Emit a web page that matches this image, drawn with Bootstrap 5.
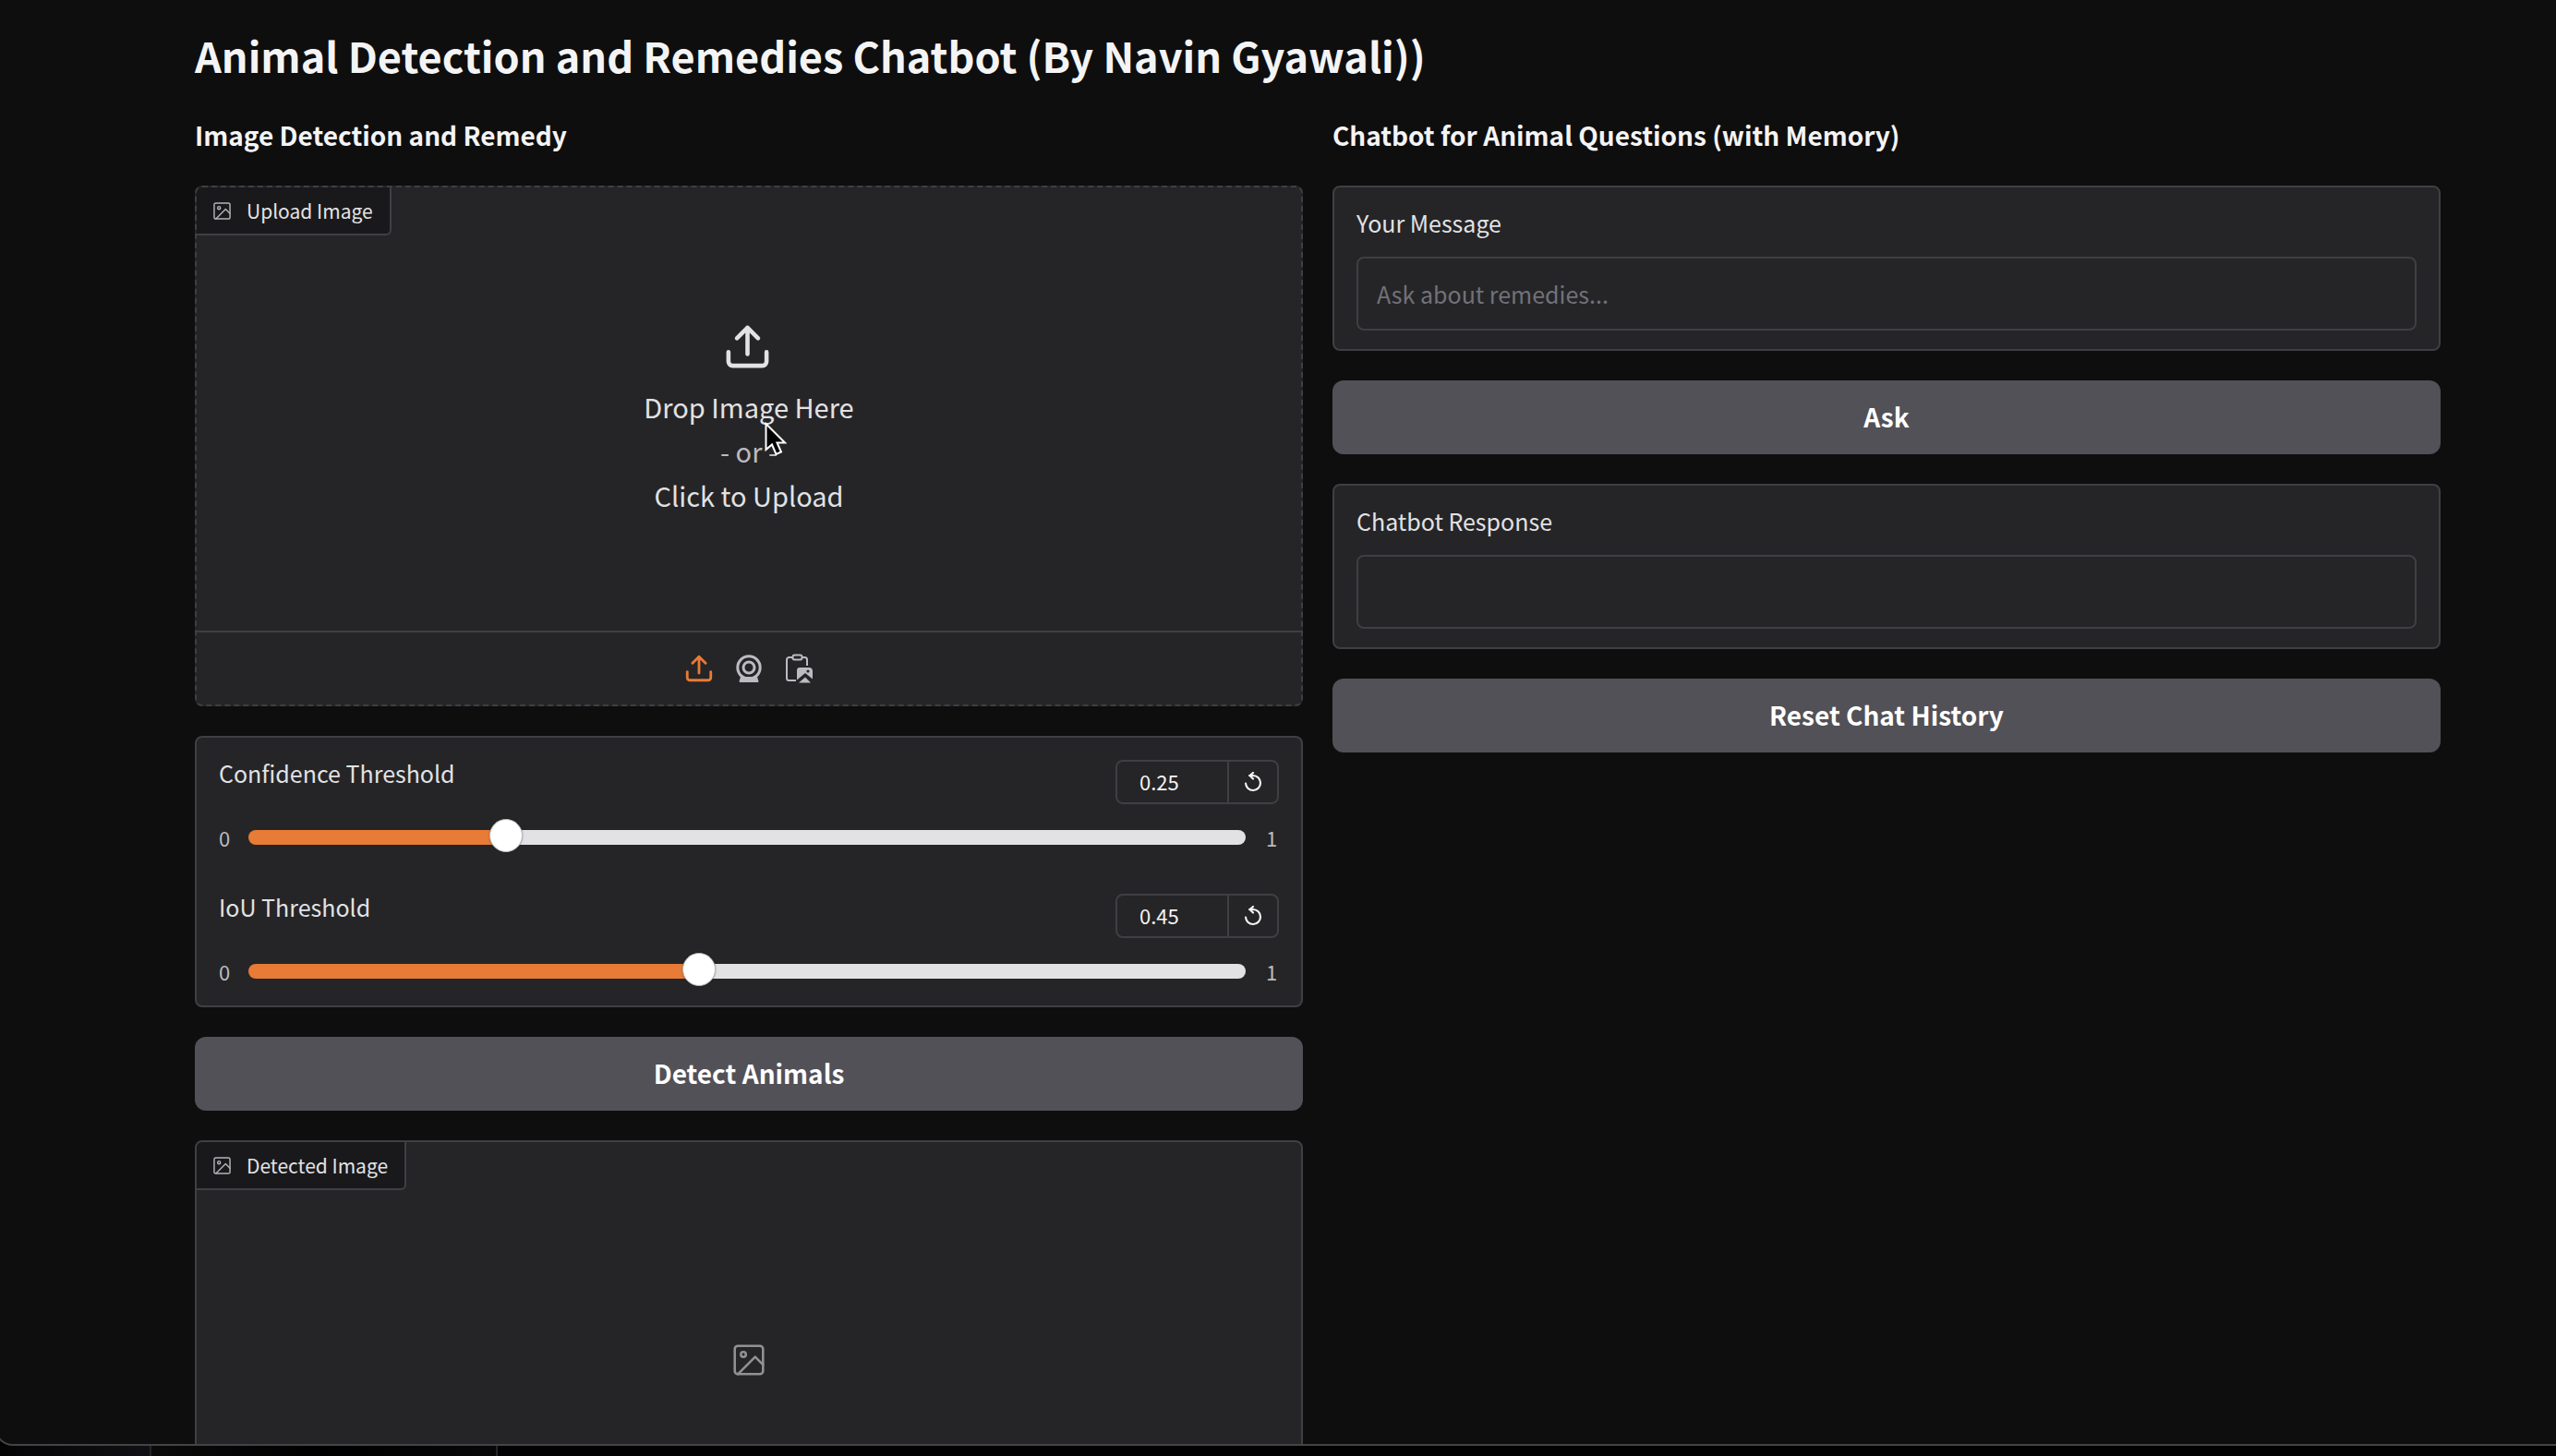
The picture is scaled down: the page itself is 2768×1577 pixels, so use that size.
<!DOCTYPE html>
<html lang="en" data-bs-theme="dark">
<head>
<meta charset="utf-8">
<meta name="viewport" content="width=device-width, initial-scale=1">
<title>Animal Detection and Remedies Chatbot</title>
<link href="https://cdn.jsdelivr.net/npm/bootstrap@5.3.0/dist/css/bootstrap.min.css" rel="stylesheet">
<style>
:root { --page: #0e0e0e; --panel: #252527; --line: #3f3f44; --ink: #f4f4f5; --soft: #e2e2e4; --muted: #bbbbc2; --accent: #e87b35; }
body { background: #000; color: var(--soft); font-family: "Noto Sans CJK SC", "Noto Sans", sans-serif; font-size: 25px; line-height: 36px; }
.app-window { background: var(--page); border: 2px solid #444446; border-width: 0 0 2px 2px; border-bottom-left-radius: 20px; margin-left: -6px; min-height: 0; }
.app-main { padding: 24px 125px 0 215px; }
.app-title { font-size: 45px; line-height: 72px; font-weight: 700; color: var(--ink); margin-bottom: 30px; }
.app-sub { font-size: 28px; line-height: 40px; font-weight: 700; color: var(--ink); margin-bottom: 3px; }
.stack { display: flex; flex-direction: column; gap: 32px; }
.cols { --bs-gutter-x: 32px; }
.panel { background: var(--panel); border: 2px solid var(--line); border-radius: 8px; }
.panel-pad { padding: 24px; }
.dashed { border-style: dashed; }
.upload { height: 564px; }
.tag { background: #19191c; color: var(--soft); border: 2px solid var(--line); border-width: 0 2px 2px 0; border-radius: 6px 0 6px 0; font-size: 21px; line-height: 32px; padding: 9px 18px; gap: 17px; }
.tag svg { color: #b4b4b8; }
.drop-btn { background: none; border: 0; color: var(--soft); font-size: 29px; line-height: 48px; padding: 22px 0 0; gap: 13px; min-height: 0; }
.muted { color: var(--muted); }
.pointer { position: absolute; left: 615px; top: 254px; }
.tools { border-top: 2px solid var(--line); height: 80px; gap: 18px; }
.tools button { background: none; border: 0; padding: 0; width: 36px; height: 36px; color: var(--muted); display: flex; align-items: center; justify-content: center; }
.tools button.on { color: var(--accent); }
.ic { fill: none; stroke: currentColor; stroke-linecap: round; stroke-linejoin: round; }
.sliders { display: flex; flex-direction: column; gap: 48px; }
.sliders label { line-height: 28px; }
.num { width: 177px; height: 48px; border: 2px solid var(--line); border-radius: 8px; overflow: hidden; }
.num input { width: 119px; padding: 0 0 2px 24px; border: 0; background: none; color: var(--ink); font-size: 22px; line-height: 32px; appearance: textfield; -moz-appearance: textfield; }
.num input::-webkit-inner-spin-button { -webkit-appearance: none; margin: 0; }
.num button { flex: 1; border: 0; border-left: 2px solid var(--line); background: none; color: var(--ink); padding: 0; display: flex; align-items: center; justify-content: center; }
.scale { height: 26px; margin-top: 23px; font-size: 22px; line-height: 26px; color: var(--muted); }
.scale span { width: 14px; }
.scale input { -webkit-appearance: none; appearance: none; flex: 1; min-width: 0; margin: 0 22px 0 18px; height: 16px; border-radius: 8px; background: linear-gradient(to right, var(--accent) var(--at), var(--soft) var(--at)); }
.scale input::-webkit-slider-runnable-track { height: 16px; }
.scale input::-webkit-slider-thumb { -webkit-appearance: none; width: 36px; height: 36px; margin-top: -12px; border-radius: 50%; background: #fff; border: 1px solid #b9b9bb; box-shadow: 0 0 2px rgba(0,0,0,.35); }
.big-btn { background: #525157; color: #fff; border: 0; border-radius: 12px; height: 80px; padding: 5px 12px 7px; font-size: 28px; line-height: 40px; font-weight: 700; }
.big-btn:hover { background: #5c5b62; color: #fff; }
.big-in, .big-in:focus { background: transparent; border: 2px solid var(--line); border-radius: 8px; height: 80px; font-size: 25px; line-height: 36px; padding: 0 20px; }
.big-in::placeholder { color: #727279; opacity: 1; }
.panel-text { padding: 20px 24px; }
.panel-text label { margin-bottom: 19px; }
.shot { height: 476px; color: #929294; }
.desk { height: 11px; background: #020203; }
.desk div { border-right: 2px solid #252527; }
.desk div:first-child { width: 164px; background: linear-gradient(to right, #040405, #101014); }
.desk div:last-child { width: 375px; background: linear-gradient(to right, #0a0a0b, #000, #070708); }
</style>
<script src="https://cdn.jsdelivr.net/npm/bootstrap@5.3.0/dist/js/bootstrap.bundle.min.js"></script>
</head>
<body class="vh-100 d-flex flex-column overflow-hidden">
<svg class="d-none">
  <symbol id="img" viewBox="2 2 20 20"><rect x="3" y="3" width="18" height="18" rx="2"/><circle cx="8.5" cy="8.5" r="1.6"/><path d="M21 15l-5-5L5 21"/></symbol>
  <symbol id="up" viewBox="0 0 24 24"><path d="M21 14.5V19a2 2 0 0 1-2 2H5a2 2 0 0 1-2-2v-4.500M17 8l-5-5-5 5M12 3v12.500"/></symbol>
  <symbol id="undo" viewBox="0 0 20 22"><path d="M2 12.500a8 8 0 1 0 8-8.500H6M10 1 6.500 4 10 7.500"/></symbol>
</svg>
<div class="app-window flex-fill overflow-hidden">
<main class="app-main">
  <h1 class="app-title">Animal Detection and Remedies Chatbot (By Navin Gyawali))</h1>
  <div class="row cols">
    <section class="col-6 stack">
      <h2 class="app-sub">Image Detection and Remedy</h2>
      <div class="panel dashed upload d-flex flex-column position-relative">
        <div class="position-absolute top-0 start-0 tag d-flex align-items-center"><svg class="ic" width="19" height="19" stroke-width="1.500"><use href="#img"/></svg>Upload Image</div>
        <button type="button" class="drop-btn w-100 flex-fill d-flex flex-column align-items-center justify-content-center">
          <svg class="ic me-1" width="55" height="55" stroke-width="2"><use href="#up"/></svg>
          <span class="d-block">Drop Image Here<br><span class="muted">- or -</span><br>Click to Upload</span>
        </button>
        <svg class="pointer" width="24" height="38" viewBox="0 0 24 38"><path d="M1.500 2v28l6.500-5.500 4.500 10.500 5.500-2.500-4.500-10h8.500z" fill="#000" stroke="#fff" stroke-width="2"/></svg>
        <div class="tools d-flex align-items-center justify-content-center flex-shrink-0">
          <button type="button" class="on" aria-label="Upload"><svg class="ic" width="34" height="34" stroke-width="2"><use href="#up"/></svg></button>
          <button type="button" aria-label="Webcam"><svg width="30" height="32" viewBox="0 0 30 32"><g fill="none" stroke="currentColor" stroke-width="3"><circle cx="15" cy="15" r="12.200"/><circle cx="15" cy="15" r="6"/></g><path d="M6 25h18l1.500 5q0 1-1 1h-19q-1 0-1-1z" fill="currentColor"/></svg></button>
          <button type="button" aria-label="Paste from clipboard"><svg width="32" height="34" viewBox="0 0 32 34"><path d="M9.500 5H5.500a2.500 2.500 0 0 0-2.500 2.500v20a2.500 2.500 0 0 0 2.500 2.500H13M19 5h3.500A2.500 2.500 0 0 1 25 7.500V14" fill="none" stroke="currentColor" stroke-width="2"/><rect x="9.500" y="2.500" width="10" height="5" rx="2" fill="none" stroke="currentColor" stroke-width="2"/><path d="M17 16h10q4 0 4 4v8.500l-8-6.500-9 7.500V19q0-3 3-3z" fill="currentColor"/><circle cx="26" cy="20" r="1.600" fill="#252527"/><path d="M16 32.500l7-6 6 6z" fill="currentColor"/></svg></button>
        </div>
      </div>
      <div class="panel panel-pad sliders">
        <div>
          <div class="d-flex justify-content-between align-items-start">
            <label for="conf">Confidence Threshold</label>
            <div class="num d-flex"><input type="number" value="0.25" step="0.01" aria-label="Confidence value"><button type="button" aria-label="Reset confidence"><svg class="ic" width="20" height="22" stroke-width="2.200"><use href="#undo"/></svg></button></div>
          </div>
          <div class="scale d-flex align-items-center"><span>0</span><input type="range" id="conf" min="0" max="1" step="0.01" value="0.25" style="--at:25%"><span>1</span></div>
        </div>
        <div>
          <div class="d-flex justify-content-between align-items-start">
            <label for="iou">IoU Threshold</label>
            <div class="num d-flex"><input type="number" value="0.45" step="0.01" aria-label="IoU value"><button type="button" aria-label="Reset IoU"><svg class="ic" width="20" height="22" stroke-width="2.200"><use href="#undo"/></svg></button></div>
          </div>
          <div class="scale d-flex align-items-center"><span>0</span><input type="range" id="iou" min="0" max="1" step="0.01" value="0.45" style="--at:45%"><span>1</span></div>
        </div>
      </div>
      <button type="button" class="btn big-btn w-100">Detect Animals</button>
      <div class="panel position-relative shot d-flex align-items-center justify-content-center">
        <div class="position-absolute top-0 start-0 tag d-flex align-items-center"><svg class="ic" width="19" height="19" stroke-width="1.500"><use href="#img"/></svg>Detected Image</div>
        <svg class="ic" width="34" height="34" stroke-width="1.500"><use href="#img"/></svg>
      </div>
    </section>
    <section class="col-6 stack">
      <h2 class="app-sub">Chatbot for Animal Questions (with Memory)</h2>
      <div class="panel panel-text d-flex flex-column">
        <label for="ask">Your Message</label>
        <input id="ask" type="text" class="form-control big-in" placeholder="Ask about remedies...">
      </div>
      <button type="button" class="btn big-btn w-100">Ask</button>
      <div class="panel panel-text d-flex flex-column">
        <label for="reply">Chatbot Response</label>
        <input id="reply" type="text" class="form-control big-in" readonly>
      </div>
      <button type="button" class="btn big-btn w-100">Reset Chat History</button>
    </section>
  </div>
</main>
</div>
<div class="desk d-flex flex-shrink-0"><div></div><div></div></div>
</body>
</html>
